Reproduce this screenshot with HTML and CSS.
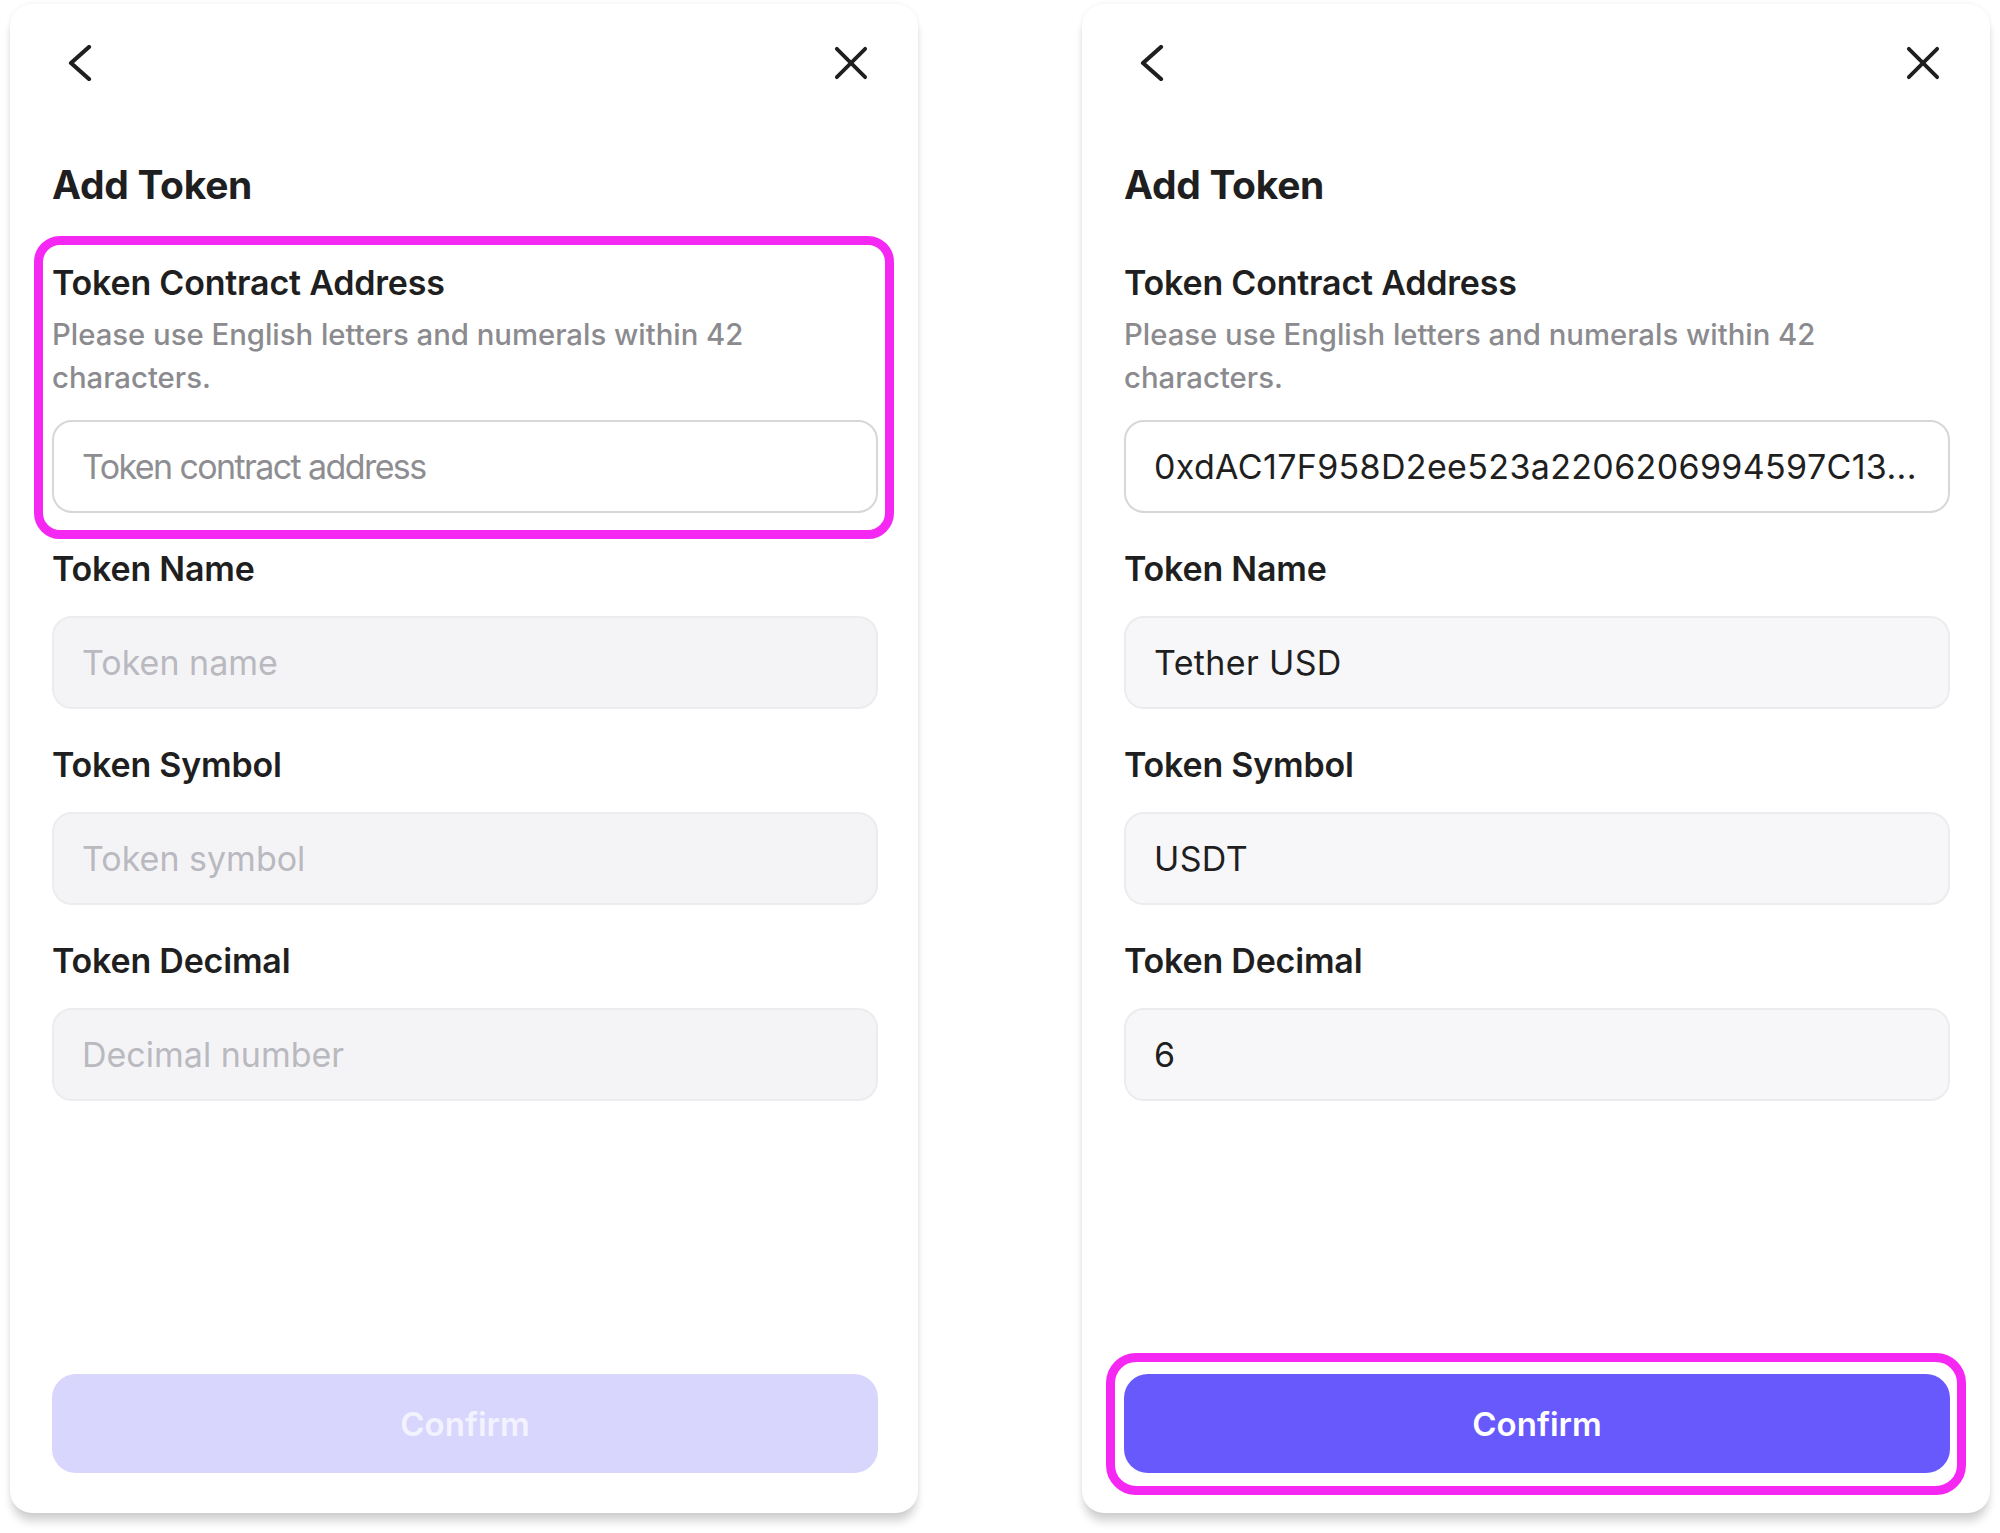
FILE: index.html
```html
<!DOCTYPE html>
<html lang="en">
<head>
<meta charset="utf-8">
<title>Add Token</title>
<link rel="stylesheet" href="styles.css">
</head>
<body>
<div class="stage">
  <section class="card">
    <div class="topbar">
      <svg class="icon back" viewBox="0 0 24 36" width="24" height="36"><path d="M21 2 L3 18 L21 34" fill="none" stroke="#1f1f21" stroke-width="4.2" stroke-linecap="round" stroke-linejoin="round"/></svg>
      <svg class="icon close" viewBox="0 0 36 36" width="36" height="36"><path d="M3 3 L33 33 M33 3 L3 33" fill="none" stroke="#1f1f21" stroke-width="4" stroke-linecap="round"/></svg>
    </div>
    <h1 class="title">Add Token</h1>
    <div class="field first highlighted">
      <div class="label">Token Contract Address</div>
      <div class="hint">Please use English letters and numerals within 42 characters.</div>
      <div class="input active"><span class="placeholder dark">Token contract address</span></div>
    </div>
    <div class="field">
      <div class="label">Token Name</div>
      <div class="input"><span class="placeholder">Token name</span></div>
    </div>
    <div class="field">
      <div class="label">Token Symbol</div>
      <div class="input"><span class="placeholder">Token symbol</span></div>
    </div>
    <div class="field">
      <div class="label">Token Decimal</div>
      <div class="input"><span class="placeholder">Decimal number</span></div>
    </div>
    <div class="actions">
      <button class="btn disabled">Confirm</button>
    </div>
  </section>

  <section class="card">
    <div class="topbar">
      <svg class="icon back" viewBox="0 0 24 36" width="24" height="36"><path d="M21 2 L3 18 L21 34" fill="none" stroke="#1f1f21" stroke-width="4.2" stroke-linecap="round" stroke-linejoin="round"/></svg>
      <svg class="icon close" viewBox="0 0 36 36" width="36" height="36"><path d="M3 3 L33 33 M33 3 L3 33" fill="none" stroke="#1f1f21" stroke-width="4" stroke-linecap="round"/></svg>
    </div>
    <h1 class="title">Add Token</h1>
    <div class="field first">
      <div class="label">Token Contract Address</div>
      <div class="hint">Please use English letters and numerals within 42 characters.</div>
      <div class="input active"><span class="value">0xdAC17F958D2ee523a2206206994597C13...</span></div>
    </div>
    <div class="field">
      <div class="label">Token Name</div>
      <div class="input filled"><span class="value">Tether USD</span></div>
    </div>
    <div class="field">
      <div class="label">Token Symbol</div>
      <div class="input filled"><span class="value">USDT</span></div>
    </div>
    <div class="field">
      <div class="label">Token Decimal</div>
      <div class="input filled"><span class="value">6</span></div>
    </div>
    <div class="actions highlighted-btn">
      <button class="btn primary">Confirm</button>
    </div>
  </section>
</div>
</body>
</html>
```

FILE: styles.css
```css
* { box-sizing: border-box; }
html, body { margin: 0; padding: 0; background: #ffffff; }
body {
  font-family: Inter, "Noto Sans", "Liberation Sans", sans-serif;
  color: #1f1f21;
  width: 2000px;
  height: 1533px;
  overflow: hidden;
}
.stage {
  display: flex;
  gap: 164px;
  padding: 4px 0 0 10px;
}
.card {
  width: 908px;
  height: 1509px;
  background: #fff;
  border-radius: 22px;
  box-shadow: 0 10px 10px -2px rgba(0,0,0,0.18), 0 0 5px rgba(0,0,0,0.06);
  padding: 36px 40px 40px 42px;
  display: flex;
  flex-direction: column;
}
.topbar {
  height: 46px;
  display: flex;
  justify-content: space-between;
  align-items: center;
}
.icon.back { margin-left: 16px; }
.icon.close { margin-right: 10px; width: 34px; height: 34px; }
.title {
  margin: 74px 0 0 0;
  font-size: 39px;
  line-height: 50px;
  font-weight: 700;
  letter-spacing: -0.3px;
}
.field { display: flex; flex-direction: column; margin-top: 36px; }
.field.first { margin-top: 53px; }
.label {
  font-size: 34px;
  line-height: 40px;
  font-weight: 600;
  letter-spacing: -0.2px;
}
.hint {
  margin-top: 10px;
  font-size: 29.3px;
  line-height: 43px;
  color: #8b8b8f;
  font-weight: 500;
  max-width: 760px;
}
.input {
  margin-top: 27px;
  height: 93px;
  border-radius: 20px;
  background: #f4f4f7;
  border: 2px solid #ececef;
  display: flex;
  align-items: center;
  padding-left: 28px;
  font-size: 34px;
}
.field.first .input { margin-top: 21px; }
.input.active { background: #fff; border-color: #d7d7da; }
.input.filled { background: #f7f7fa; border-color: #ececef; }
.placeholder { color: #b9b9bf; }
.placeholder.dark { color: #8e8e92; letter-spacing: -1.6px; }
.value { color: #1f1f21; white-space: nowrap; letter-spacing: 0.35px; }
.highlighted { position: relative; }
.highlighted::before {
  content: "";
  position: absolute;
  top: -27px; bottom: -26px; left: -18px; right: -16px;
  border: 9px solid #f427f3;
  border-radius: 26px;
  pointer-events: none;
}
.actions { margin-top: auto; position: relative; }
.btn {
  width: 100%;
  height: 99px;
  border: none;
  border-radius: 24px;
  font-family: inherit;
  font-size: 33px;
  font-weight: 600;
  display: block;
}
.btn.disabled { background: #d9d6fd; color: #f3f2ff; }
.btn.primary { background: #6759fc; color: #ffffff; }
.highlighted-btn::before {
  content: "";
  position: absolute;
  top: -21px; bottom: -22px; left: -18px; right: -16px;
  border: 9px solid #f427f3;
  border-radius: 30px;
  pointer-events: none;
}
```
